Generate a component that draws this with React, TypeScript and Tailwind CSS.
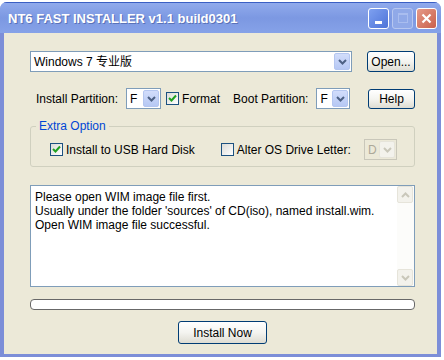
import React from "react";

const FONT = "font-['Liberation_Sans','Noto_Sans_CJK_SC',sans-serif]";

function Chevron({ color = "#4d6185" }: { color?: string }) {
  return (
    <svg width="9" height="6" viewBox="0 0 9 6">
      <path d="M1 1 L4.5 4.5 L8 1" fill="none" stroke={color} strokeWidth="2" />
    </svg>
  );
}

function ArrowButton({ disabled, up }: { disabled?: boolean; up?: boolean }) {
  return (
    <div
      className={
        disabled
          ? "flex w-[16px] items-center justify-center self-stretch rounded-[2px] border border-[#e6e4da] bg-[#f3f2ec]"
          : "flex w-[16px] items-center justify-center self-stretch rounded-[2px] border border-[#b4c6f0] bg-gradient-to-b from-[#d2ddfb] to-[#b6c8f4]"
      }
    >
      <div className={up ? "rotate-180" : ""}>
        <Chevron color={disabled ? "#c9c7ba" : "#4d6185"} />
      </div>
    </div>
  );
}

function Select({ value, width, disabled }: { value: string; width: string; disabled?: boolean }) {
  return (
    <div
      className={`flex h-[21px] ${width} items-stretch border p-[1px] ${
        disabled ? "border-[#c9c7ba] bg-[#ece9d8] text-[#aca899]" : "border-[#7f9db9] bg-white text-black"
      }`}
    >
      <div className="flex flex-1 items-center pl-[2px]">{value}</div>
      <ArrowButton disabled={disabled} />
    </div>
  );
}

function Checkbox({ checked }: { checked?: boolean }) {
  return (
    <div className="flex h-[13px] w-[13px] flex-none items-center justify-center border border-[#1c5180] bg-gradient-to-br from-[#dcdcd7] to-white">
      {checked && (
        <svg width="9" height="9" viewBox="0 0 9 9">
          <path d="M1 4 L3.5 6.5 L8 1.5" fill="none" stroke="#21a121" strokeWidth="2" />
        </svg>
      )}
    </div>
  );
}

function XpButton({ children, className }: { children: React.ReactNode; className: string }) {
  return (
    <div
      className={`flex items-center justify-center rounded-[3px] border border-[#003c74] bg-gradient-to-b from-white via-[#f4f4f0] to-[#dedcd2] text-black ${className}`}
    >
      {children}
    </div>
  );
}

export default function App() {
  return (
    <div className={`h-[360px] w-[444px] bg-white pt-[2px] ${FONT} text-[12px]`}>
      <div className="flex h-[355px] w-[441px] flex-col overflow-hidden rounded-t-[7px] bg-[#7c8ed8]">
        {/* title bar */}
        <div className="flex h-[31px] items-center border-t border-[#3a5fc4] bg-gradient-to-b from-[#90aaec] via-[#7c98e2] to-[#86a2e8] pl-[8px] pr-[4px]">
          <div className="flex-1 pt-[2px] text-[13px] font-bold text-white [text-shadow:1px_1px_0_#5a72b8]">
            NT6 FAST INSTALLER v1.1 build0301
          </div>
          <div className="flex gap-[3px]">
            <div className="flex h-[21px] w-[21px] items-end justify-center rounded-[3px] border border-white bg-gradient-to-br from-[#7ea0f0] to-[#4f74d8] pb-[4px]">
              <div className="h-[3px] w-[7px] bg-white" />
            </div>
            <div className="flex h-[21px] w-[21px] items-center justify-center rounded-[3px] border border-[#b7c7f0] bg-[#90a9e8]">
              <div className="h-[10px] w-[10px] border border-t-2 border-[#a9bdef]" />
            </div>
            <div className="flex h-[21px] w-[21px] items-center justify-center rounded-[3px] border border-white bg-gradient-to-br from-[#e59a88] to-[#c9604c]">
              <svg width="11" height="11" viewBox="0 0 11 11">
                <path d="M1.5 1.5 L9.5 9.5 M9.5 1.5 L1.5 9.5" stroke="white" strokeWidth="2.2" />
              </svg>
            </div>
          </div>
        </div>

        {/* body */}
        <div className="mx-[4px] mb-[3px] flex flex-1 flex-col bg-[#ece9d8] pl-[26px] pr-[22px] pt-[18px]">
          <div className="flex items-center">
            <div className="flex h-[21px] w-[322px] items-stretch border border-[#7f9db9] bg-white p-[1px]">
              <div className="flex flex-1 items-center pl-[2px] text-black">Windows 7 专业版</div>
              <ArrowButton />
            </div>
            <XpButton className="ml-[15px] h-[21px] w-[48px]">Open...</XpButton>
          </div>

          <div className="mt-[16px] flex items-center whitespace-nowrap">
            <span className="ml-[6px]">Install Partition:</span>
            <div className="ml-[8px]">
              <Select value="F" width="w-[35px]" />
            </div>
            <div className="ml-[5px]">
              <Checkbox checked />
            </div>
            <span className="ml-[3px]">Format</span>
            <span className="ml-[13px]">Boot Partition:</span>
            <div className="ml-[8px]">
              <Select value="F" width="w-[34px]" />
            </div>
            <XpButton className="ml-auto h-[20px] w-[47px]">Help</XpButton>
          </div>

          <fieldset className="mt-[8px] h-[50px] rounded-[3px] border border-[#d0d0bf] pl-[19px] pr-[17px]">
            <legend className="-ml-[14px] px-[3px] text-[#0046d5]">Extra Option</legend>
            <div className="mt-[4px] flex items-center whitespace-nowrap">
              <Checkbox checked />
              <span className="ml-[3px]">Install to USB Hard Disk</span>
              <div className="ml-[26px]">
                <Checkbox />
              </div>
              <span className="ml-[3px]">Alter OS Drive Letter:</span>
              <div className="ml-auto">
                <Select value="D" width="w-[33px]" disabled />
              </div>
            </div>
          </fieldset>

          <div className="mt-[18px] flex h-[102px] border border-[#7f9db9] bg-white">
            <div className="flex-1 pl-[4px] pt-[4px] leading-[14px] text-black">
              <div>Please open WIM image file first.</div>
              <div>Usually under the folder 'sources' of CD(iso), named install.wim.</div>
              <div>Open WIM image file successful.</div>
            </div>
            <div className="flex w-[17px] flex-col bg-[#fcfcfa]">
              <div className="flex h-[17px]">
                <ArrowButton disabled up />
              </div>
              <div className="flex-1" />
              <div className="flex h-[17px]">
                <ArrowButton disabled />
              </div>
            </div>
          </div>

          <div className="mt-[12px] h-[11px] rounded-[4px] border border-[#686868] bg-white" />

          <div className="mt-[11px] flex justify-center">
            <XpButton className="h-[23px] w-[89px]">Install Now</XpButton>
          </div>
        </div>
      </div>
    </div>
  );
}
